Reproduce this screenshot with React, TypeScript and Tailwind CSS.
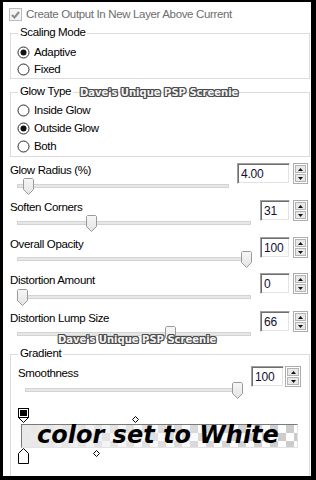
import React from "react"

function Radio({ checked, label }: { checked?: boolean; label: string }) {
  return (
    <div className="flex h-[17px] items-center gap-[4px]">
      <svg width="13" height="13" viewBox="0 0 13 13" className="shrink-0">
        <circle cx="6.5" cy="6.5" r="5.5" fill="#ffffff" stroke="#2a2a2a" />
        {checked && <circle cx="6.5" cy="6.5" r="3" fill="#111111" />}
      </svg>
      <span className="leading-[15px]">{label}</span>
    </div>
  )
}

function Spinner({ className }: { className: string }) {
  return (
    <div className={`flex h-[21px] flex-col gap-[1px] border border-[#acacac] bg-white p-[1px] ${className}`}>
      <div className="flex flex-1 items-center justify-center border border-[#b4b4b4] bg-[#e8e8e8]">
        <svg width="5" height="3" viewBox="0 0 5 3">
          <path d="M2.5 0 L5 3 H0 Z" fill="#111" />
        </svg>
      </div>
      <div className="flex flex-1 items-center justify-center border border-[#b4b4b4] bg-[#e8e8e8]">
        <svg width="5" height="3" viewBox="0 0 5 3">
          <path d="M0 0 H5 L2.5 3 Z" fill="#111" />
        </svg>
      </div>
    </div>
  )
}

function NumBox({ value, className }: { value: string; className: string }) {
  return (
    <div
      className={`flex h-[21px] items-center border border-[#a0a0a0] border-b-white border-r-white bg-white pl-[3px] text-[12px] leading-none tracking-[-0.2px] text-[#101030] shadow-[inset_1px_1px_0_#6e6e6e,inset_-1px_-1px_0_#e3e3e3] ${className}`}
    >
      {value}
    </div>
  )
}

function Thumb() {
  return (
    <svg width="11" height="17" viewBox="0 0 11 17">
      <defs>
        <linearGradient id="thumbfill" x1="0" y1="0" x2="0" y2="1">
          <stop offset="0" stopColor="#f7f7f7" />
          <stop offset="1" stopColor="#e3e3e3" />
        </linearGradient>
      </defs>
      <path d="M1.5 0.5 H9.5 L10.5 1.5 V11.5 L5.5 16.5 L0.5 11.5 V1.5 Z" fill="url(#thumbfill)" stroke="#9a9a9a" />
    </svg>
  )
}

function Track({ className, thumb }: { className: string; thumb: string }) {
  return (
    <div className={`relative h-[4px] border border-[#d3d3d3] bg-[#e6e8e8] ${className}`}>
      <div className={`absolute top-[-7px] ${thumb}`}>
        <Thumb />
      </div>
    </div>
  )
}

function SliderRow({
  label,
  value,
  rowH,
  trackTop,
  trackW,
  thumb,
  boxW,
}: {
  label: string
  value: string
  rowH: string
  trackTop: string
  trackW: string
  thumb: string
  boxW: string
}) {
  return (
    <div className={`flex pr-[2px] ${rowH}`}>
      <div className="flex flex-1 flex-col">
        <span className="leading-[15px]">{label}</span>
        <Track className={`ml-[7px] ${trackTop} ${trackW}`} thumb={thumb} />
      </div>
      <NumBox value={value} className={boxW} />
      <Spinner className="ml-[3px] w-[15px]" />
    </div>
  )
}

function GroupBox({ label, className, children }: { label: string; className: string; children: React.ReactNode }) {
  return (
    <div className={`relative border border-[#dcdcdc] ${className}`}>
      <span className="absolute left-[7px] top-[-9px] bg-white px-[2px] leading-[15px]">{label}</span>
      {children}
    </div>
  )
}

function Watermark({ className }: { className: string }) {
  return (
    <span
      className={`absolute whitespace-nowrap font-['DejaVu_Sans',sans-serif] text-[10px] font-bold leading-none tracking-normal text-[#f4f4f4] [text-shadow:1px_0_#4a4a4a,-1px_0_#4a4a4a,0_1px_#4a4a4a,0_-1px_#4a4a4a,1px_1px_#4a4a4a,-1px_-1px_#4a4a4a,1px_-1px_#4a4a4a,-1px_1px_#4a4a4a] ${className}`}
    >
      Dave's Unique PSP Screenie
    </span>
  )
}

export default function App() {
  return (
    <div className="h-[480px] w-[316px] bg-black pl-[3px] pt-[2px]">
      <div className="relative flex h-[474px] w-[308px] flex-col overflow-hidden bg-white pl-[7px] pr-[1px] pt-[6px] font-['Liberation_Sans',sans-serif] text-[11.5px] tracking-[-0.35px] text-black">
        {/* output checkbox, disabled */}
        <div className="ml-[-1px] flex h-[13px] items-center gap-[4px] text-[#6d6d6d]">
          <div className="flex size-[13px] shrink-0 items-center justify-center border border-[#bcbcbc] bg-[#f4f4f4]">
            <svg width="9" height="8" viewBox="0 0 9 8">
              <path d="M1 4 L3.5 6.5 L8 1" fill="none" stroke="#8a8a8a" strokeWidth="2" />
            </svg>
          </div>
          <span className="leading-[15px]">Create Output In New Layer Above Current</span>
        </div>

        <GroupBox label="Scaling Mode" className="mt-[12px] h-[50px] pl-[6px] pt-[10px]">
          <Radio checked label="Adaptive" />
          <Radio label="Fixed" />
        </GroupBox>

        <GroupBox label="Glow Type" className="mt-[13px] h-[68px] pl-[6px] pt-[9px]">
          <div className="flex flex-col">
            <div className="h-[18px]">
              <Radio label="Inside Glow" />
            </div>
            <div className="h-[18px]">
              <Radio checked label="Outside Glow" />
            </div>
            <div className="h-[18px]">
              <Radio label="Both" />
            </div>
          </div>
        </GroupBox>

        <div className="mt-[6px] flex flex-col">
          <SliderRow label="Glow Radius (%)" value="4.00" rowH="h-[37px]" trackTop="mt-[6px]" trackW="w-[212px]" thumb="left-[5px]" boxW="w-[53px]" />
          <SliderRow label="Soften Corners" value="31" rowH="h-[37px]" trackTop="mt-[6px]" trackW="w-[234px]" thumb="left-[68px]" boxW="w-[30px]" />
          <SliderRow label="Overall Opacity" value="100" rowH="h-[36px]" trackTop="mt-[5px]" trackW="w-[234px]" thumb="left-[223px]" boxW="w-[30px]" />
          <SliderRow label="Distortion Amount" value="0" rowH="h-[38px]" trackTop="mt-[7px]" trackW="w-[234px]" thumb="left-[-1px]" boxW="w-[30px]" />
          <SliderRow label="Distortion Lump Size" value="66" rowH="h-[43px]" trackTop="mt-[6px]" trackW="w-[234px]" thumb="left-[147px]" boxW="w-[30px]" />
        </div>

        <GroupBox label="Gradient" className="h-[130px] shrink-0 pt-[11px]">
          <div className="flex h-[42px] pl-[7px] pr-[8px]">
            <div className="flex flex-1 flex-col">
              <span className="leading-[15px]">Smoothness</span>
              <Track className="ml-[7px] mt-[7px] w-[216px]" thumb="left-[206px]" />
            </div>
            <NumBox value="100" className="w-[33px]" />
            <Spinner className="ml-[1px] w-[16px]" />
          </div>

          {/* gradient editor */}
          <div className="relative ml-[7px] h-[16px]">
            <svg width="11" height="16" viewBox="0 0 11 16">
              <rect x="0.5" y="0.5" width="10" height="9" fill="#ffffff" stroke="#000" />
              <rect x="2" y="2" width="7" height="6" fill="#000" />
              <path d="M0.5 9.5 H10.5 L5.5 14.5 Z" fill="#ffffff" stroke="#000" />
            </svg>
            <svg width="7" height="7" viewBox="0 0 7 7" className="absolute left-[114px] top-[8px]">
              <path d="M3.5 0.5 L6.5 3.5 L3.5 6.5 L0.5 3.5 Z" fill="#fff" stroke="#000" />
            </svg>
          </div>
          <div className="ml-[10px] h-[24px] w-[277px] border border-[#7a7a7a] border-b-[#e3e3e3] border-r-[#e3e3e3] bg-[conic-gradient(#cbcbcb_25%,#ffffff_0_50%,#cbcbcb_0_75%,#ffffff_0)] bg-size-[16px_16px]">
            <div className="h-full w-full bg-linear-to-r from-[#e9e9e9] via-[#f2f2f2]/60 via-40% to-white/0 pl-[15px] font-['DejaVu_Sans',sans-serif] text-[24px] font-bold italic leading-[21px] tracking-normal text-black">
              color set to White
            </div>
          </div>
          <div className="relative ml-[7px] h-[16px]">
            <svg width="11" height="16" viewBox="0 0 11 16">
              <path d="M5.5 0.5 L10.5 5.5 V15.5 H0.5 V5.5 Z" fill="#ffffff" stroke="#000" />
            </svg>
            <svg width="7" height="7" viewBox="0 0 7 7" className="absolute left-[75px] top-[2px]">
              <path d="M3.5 0.5 L6.5 3.5 L3.5 6.5 L0.5 3.5 Z" fill="#fff" stroke="#000" />
            </svg>
          </div>
        </GroupBox>

        <Watermark className="left-[77px] top-[86px]" />
        <Watermark className="left-[55px] top-[333px]" />
      </div>
    </div>
  )
}
